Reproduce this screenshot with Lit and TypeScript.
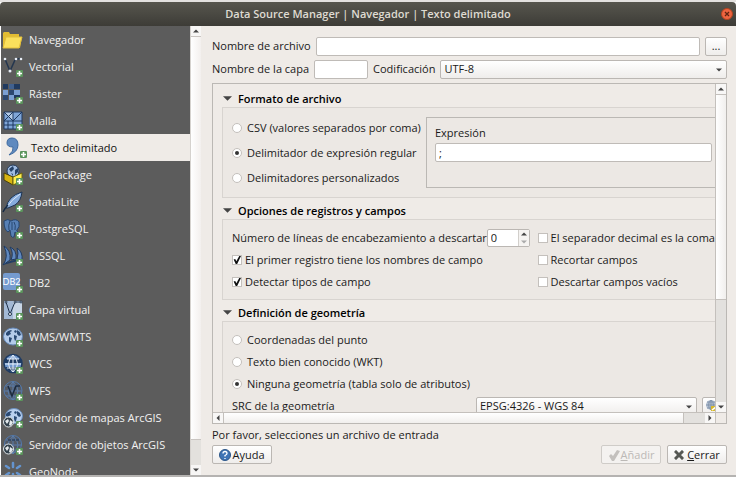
import { LitElement, html, svg, css, nothing, SVGTemplateResult } from "lit";
import { customElement } from "lit/decorators.js";
import { classMap } from "lit/directives/class-map.js";

interface Source {
  name: string;
  icon: string;
  active?: boolean;
}

const SOURCES: Source[] = [
  { name: "Navegador", icon: "folder" },
  { name: "Vectorial", icon: "vector" },
  { name: "Ráster", icon: "raster" },
  { name: "Malla", icon: "mesh" },
  { name: "Texto delimitado", icon: "comma", active: true },
  { name: "GeoPackage", icon: "geopackage" },
  { name: "SpatiaLite", icon: "feather" },
  { name: "PostgreSQL", icon: "elephant" },
  { name: "MSSQL", icon: "sail" },
  { name: "DB2", icon: "db2" },
  { name: "Capa virtual", icon: "virtual" },
  { name: "WMS/WMTS", icon: "wms" },
  { name: "WCS", icon: "wcs" },
  { name: "WFS", icon: "wfs" },
  { name: "Servidor de mapas ArcGIS", icon: "arcmap" },
  { name: "Servidor de objetos ArcGIS", icon: "arcfeature" },
  { name: "GeoNode", icon: "geonode" },
];

const land = svg`<path d="M3 6l2-2 3-1 1 1-2 1 1 2-2 1-1 1-2-1zM6 10l3 1-1 3-1 2-1-2zM11 4l2-1 1 2-2 1zM14 3l3 2 1 3-2 1-2-2zM11 8l3 1-1 4-1 1-1-3z" fill="#2a4a74"/>`;
const smallGlobe = svg`<circle cx="5.500" cy="14" r="5" fill="#34424d" stroke="#dfe5e8"/><path d="M2 13l3-2 1 2-2 3zM7 12l3 2-2 4-2-1z" fill="#e6ebee"/>`;
const graticule = svg`<path d="M10 1v18M1 10h18M3 5h14M3 15h14M10 1q-10 9 0 18M10 1q10 9 0 18" fill="none"/>`;

const ICONS: Record<string, SVGTemplateResult> = {
  folder: svg`<path d="M0 17V3l1-1h5l1 2h9v3h3l-2 11H1z" fill="#e3bd33"/><path d="M3 7h16l-3 11H0z" fill="#fbe05c" stroke="#e2bf3c"/>`,
  vector: svg`<path d="M2 2l5 12 5-11q2-2 7-1" fill="none" stroke="#24364f" stroke-width="1.500"/><g fill="#e8eef6"><circle cx="2" cy="2" r="1.300"/><circle cx="13" cy="2" r="1.300"/><circle cx="18" cy="2" r="1.300"/><circle cx="7" cy="14" r="1.500"/></g>`,
  raster: svg`<path d="M0 0h5v5H0zM11 0h6v5h-6z" fill="#203a5f"/><path d="M6 0h5v5H6z" fill="#41618f"/><path d="M0 6h5v5H0zM11 6h6v5h-6zM6 11h5v5H6z" fill="#7ba0d3"/><path d="M6 6h5v5H6zM0 11h5v5H0z" fill="#2c4871"/><path d="M11 11h6v3h-6z" fill="#203a5f"/>`,
  mesh: svg`<path d="M1 1h18v17H1z" fill="#7fa5d8"/><path d="M1 1h9v9z" fill="#b4cbe8"/><path d="M1 1h18v17H1zM1 10h18M10 1v17M1 1l9 9M10 1l-9 9M19 1l-9 9M1 14h18M5 10v8" fill="none" stroke="#1e3961"/>`,
  comma: svg`<path d="M0 5q0-5 5-5 6 0 6 7 0 7-9 10 5-4 4-8-6 0-6-4z" fill="#5f8abf" stroke="#3e6aa0"/>`,
  geopackage: svg`<circle cx="10" cy="6" r="6" fill="#9fbbe0" stroke="#243b5b"/><path d="M6 4l4-3 1 3-3 3zM12 5l3-2v4l-3 3zM8 8l2 1v2z" fill="#254268"/><path d="M1 8l9 4v8l-9-5z" fill="#d8b512" stroke="#4a410c"/><path d="M10 12l9-4v8l-9 4z" fill="#ffee50" stroke="#6a620f"/>`,
  feather: svg`<path d="M3 16Q5 4 19 0q-1 9-7 13l-7 3z" fill="#86abdc" stroke="#1d3453"/><path d="M4 15Q8 8 17 2" fill="none" stroke="#dbe8f8"/><path d="M0 20q2-4 5-7" fill="none" stroke="#152a45" stroke-width="1.500"/>`,
  elephant: svg`<path d="M1 2q4-3 7 0 5-3 8 1 1 5-2 8-1 1 1 2-2 2-3 0l-1 5q-2 1-3-1l-1-6-2 2q-4-2-4-11z" fill="#5780b5" stroke="#27466f"/><path d="M7 2q-2 4-1 9M11 3q2 3 1 8M9 3v8" fill="none" stroke="#27466f"/>`,
  sail: svg`<path d="M0 19q6-8 1-19 7 4 6 14zM8 14Q11 7 7 1q7 3 6 12zM14 13q2-6 0-11 6 4 5 12z" fill="#6089c0" stroke="#203b61"/><path d="M0 19q8-6 19-5l-8 2z" fill="#213e66"/>`,
  db2: svg`<rect x="0" y="0" width="17" height="17" rx="2" fill="#759bcf"/><text x="8.500" y="12" text-anchor="middle" font-family="Lato, sans-serif" font-size="9" fill="#fff">DB2</text>`,
  virtual: svg`<path d="M1 1h18v18H1z" fill="#a3b9d5"/><path d="M10 1h9v18h-9z" fill="#c8d6e6"/><path d="M3 2l4 12 5-12h6" fill="none" stroke="#1d304b"/><g fill="#fff" stroke="#20354f"><circle cx="3" cy="2" r="1"/><circle cx="12" cy="2" r="1"/><circle cx="18" cy="2" r="1"/><circle cx="7" cy="14" r="1.500"/></g>`,
  wms: svg`<ellipse cx="10" cy="9.500" rx="9.500" ry="8.500" fill="#b3cbea" stroke="#6488b8"/>${land}`,
  wcs: svg`<circle cx="10" cy="9.500" r="9" fill="#7199ce" stroke="#1f3b62" stroke-width="1.500"/><path d="M2 5h16v4H2zM2 13h15l-3 4H6z" fill="#1f3b62"/><path d="M10 1v17M2 10h16M10 1q-9 9 0 17M10 1q9 9 0 17M4 5h12M4 14h12" fill="none" stroke="#e4edf8"/>`,
  wfs: svg`<circle cx="10" cy="9.500" r="9" fill="#545b66" stroke="#5279ad"/><g stroke="#5a7daa">${graticule}</g><path d="M5 5l4 10 4-10h4" fill="none" stroke="#1b2a3f" stroke-width="1.500"/>`,
  arcmap: svg`<ellipse cx="11" cy="8" rx="8.500" ry="7.500" fill="#b9d0ef" stroke="#6b90c0"/>${land}${smallGlobe}`,
  arcfeature: svg`<circle cx="10" cy="9" r="8.500" fill="#545b66" stroke="#5279ad"/><g stroke="#5a7daa">${graticule}</g><path d="M5 5h12" stroke="#17263b" stroke-dasharray="3 1"/>${smallGlobe}`,
  geonode: svg`<g stroke="#6494cf" stroke-width="2.500" stroke-linecap="round"><path d="M10 1v4M3 4l3 2M17 4l-3 2M3 13l3-2M17 13l-3-2M10 16v-4"/></g>`,
};

const badge = svg`<rect x="13" y="13" width="7" height="7" rx="1" fill="#5b955c"/><path d="M16.500 14v5M14 16.500h5" stroke="#fff" stroke-width="1.600"/>`;

const arrow = (dir: "up" | "down" | "left" | "right") => {
  const d = {
    up: "M0 6L4 2l4 4z",
    down: "M0 2h8L4 6z",
    left: "M6 0v8L2 4z",
    right: "M2 0v8l4-4z",
  }[dir];
  return html`<svg class="arrow" viewBox="0 0 8 8" aria-hidden="true"><path d=${d} fill="currentColor" /></svg>`;
};

@customElement("source-list")
export class SourceList extends LitElement {
  static styles = css`
    :host {
      display: grid;
      grid-template-columns: minmax(0, 1fr) 11px;
      min-height: 0;
      overflow: hidden;
      background: #5c5c5c;
      border-left: 1px solid #fff;
    }
    .list {
      margin: 0;
      padding: 0;
      list-style: none;
      overflow: hidden;
      min-height: 0;
    }
    .item {
      display: flex;
      align-items: center;
      gap: 6px;
      width: 100%;
      height: 27px;
      padding: 0 2px;
      border: 0;
      background: none;
      color: #f2f2f2;
      font: inherit;
      text-align: left;
      white-space: nowrap;
    }
    .item.active {
      padding-left: 6px;
      gap: 4px;
      background: #efebe7;
      color: #111;
    }
    .icon {
      flex: none;
      width: 20px;
      height: 20px;
      overflow: visible;
    }
    .bar {
      display: flex;
      flex-direction: column;
      background: #e3e1dd;
      border-left: 1px solid #d5d2ce;
    }
    .step {
      display: grid;
      place-items: center;
      height: 10px;
      padding: 0;
      border: 0;
      background: #f7f6f5;
      color: #444;
    }
    .thumb {
      flex: 1;
      background: linear-gradient(90deg, #fff, #f3f0ee);
      border: solid #c9c5c1;
      border-width: 1px 0;
    }
    .trough {
      height: 25px;
    }
    .arrow {
      width: 6px;
      height: 6px;
    }
  `;

  render() {
    return html`
      <ul class="list">
        ${SOURCES.map(
          (s) => html`<li>
            <button class=${classMap({ item: true, active: !!s.active })}>
              <svg class="icon" viewBox="0 0 20 20" aria-hidden="true">
                ${ICONS[s.icon]}${s.icon === "folder" ? nothing : badge}
              </svg>
              <span>${s.name}</span>
            </button>
          </li>`
        )}
      </ul>
      <div class="bar">
        <button class="step" aria-label="Subir">${arrow("up")}</button>
        <div class="thumb"></div>
        <div class="trough"></div>
        <button class="step" aria-label="Bajar">${arrow("down")}</button>
      </div>
    `;
  }
}

@customElement("delimited-form")
export class DelimitedForm extends LitElement {
  static styles = css`
    :host {
      display: flex;
      flex-direction: column;
      min-width: 0;
      min-height: 0;
      padding: 11px 9px 11px 11px;
      background: #efebe7;
      white-space: nowrap;
    }
    * {
      box-sizing: border-box;
    }
    input,
    select,
    button {
      font: inherit;
      color: inherit;
      margin: 0;
    }
    .row {
      display: flex;
      align-items: center;
      gap: 5px;
      height: 18px;
      margin-bottom: 5px;
    }
    .text {
      height: 19px;
      min-width: 0;
      padding: 0 3px;
      border: 1px solid #bfbbb7;
      border-radius: 2px;
      background: #fff;
    }
    .grow {
      flex: 1;
    }
    .layer {
      width: 54px;
    }
    .button {
      display: flex;
      align-items: center;
      justify-content: center;
      height: 19px;
      padding: 0;
      border: 1px solid #bbb7b3;
      border-radius: 2px;
      background: linear-gradient(#fff, #efedeb);
    }
    .browse {
      width: 22px;
    }
    .combo {
      position: relative;
      display: flex;
      min-width: 0;
    }
    .combo select {
      appearance: none;
      width: 100%;
      height: 19px;
      padding: 0 16px 0 3px;
      border: 1px solid #bbb7b3;
      border-radius: 2px;
      background: linear-gradient(#fff, #efedeb);
    }
    .combo .arrow {
      position: absolute;
      right: 5px;
      top: 7px;
      pointer-events: none;
    }
    .arrow {
      width: 6px;
      height: 6px;
      color: #444;
    }
    .pane {
      flex: 1;
      min-height: 0;
      display: grid;
      grid-template-columns: minmax(0, 1fr) 11px;
      grid-template-rows: minmax(0, 1fr) 11px;
      border: 1px solid #bbb8b4;
    }
    .view {
      overflow: hidden;
    }
    .canvas {
      width: calc(100% + 30px);
      padding: 6px 9px;
    }
    .head {
      display: flex;
      align-items: center;
      gap: 6px;
      height: 17px;
      margin: 0;
      padding-left: 1px;
      font-size: 11px;
      font-weight: 600;
      color: #000;
    }
    .head .arrow {
      width: 9px;
      height: 9px;
    }
    .group {
      border: 1px solid #d8d4d0;
      background: #ece8e4;
      padding: 7px 9px;
      margin-bottom: 4px;
    }
    .format {
      display: grid;
      grid-template-columns: 194px minmax(0, 1fr);
      height: 91px;
      padding-top: 9px;
    }
    .choices {
      display: flex;
      flex-direction: column;
      gap: 3px;
    }
    .choices .option {
      height: 22px;
    }
    .expr {
      height: 71px;
      padding: 6px 13px 6px 8px;
      border: 1px solid #bbb8b4;
      display: flex;
      flex-direction: column;
      gap: 1px;
    }
    .expr label {
      line-height: 18px;
    }
    .options {
      display: grid;
      grid-template-columns: minmax(0, 30fr) minmax(0, 19fr);
      grid-auto-rows: 22px;
      column-gap: 8px;
      height: 81px;
    }
    .option {
      display: flex;
      align-items: center;
      gap: 5px;
    }
    .options .option {
      gap: 3px;
    }
    .count {
      display: flex;
      align-items: center;
      justify-content: space-between;
    }
    .spin {
      display: flex;
      width: 43px;
      height: 18px;
      border: 1px solid #bbb7b3;
      border-radius: 2px;
      background: #fff;
    }
    .spin input {
      appearance: textfield;
      flex: 1;
      min-width: 0;
      padding: 0 3px;
      border: 0;
      background: none;
    }
    .spin input::-webkit-inner-spin-button {
      display: none;
    }
    .steps {
      display: flex;
      flex-direction: column;
      width: 11px;
      border-left: 1px solid #d2cfcb;
    }
    .steps button {
      flex: 1;
      display: grid;
      place-items: center;
      min-height: 0;
      padding: 0;
      border: 0;
      background: #f5f3f1;
    }
    .steps .off .arrow {
      color: #aaa;
    }
    .radio,
    .check {
      appearance: none;
      flex: none;
      display: grid;
      place-items: center;
      width: 10px;
      height: 10px;
      background: #fff;
      border: 1px solid #c4c0bc;
    }
    .radio {
      border-radius: 50%;
    }
    .radio:checked::before {
      content: "";
      width: 4px;
      height: 4px;
      border-radius: 50%;
      background: #333;
    }
    .check:checked::before {
      content: "";
      width: 8px;
      height: 8px;
      background: #111;
      clip-path: polygon(8% 45%, 28% 38%, 42% 65%, 78% 0, 100% 0, 52% 100%, 34% 100%);
    }
    .geometry .option {
      height: 22px;
    }
    .crs {
      display: grid;
      grid-template-columns: minmax(0, 244fr) minmax(0, 221fr) 29px;
      align-items: center;
      height: 22px;
    }
    .crs .button {
      margin-left: 5px;
      width: 24px;
      padding: 0 3px;
      justify-content: flex-start;
    }
    .globe {
      width: 14px;
      height: 14px;
      flex: none;
    }
    .vbar,
    .hbar {
      display: flex;
      background: #e3e1de;
    }
    .vbar {
      flex-direction: column;
      border-left: 1px solid #c4c0bc;
    }
    .hbar {
      border-top: 1px solid #c4c0bc;
    }
    .corner {
      border: solid #c4c0bc;
      border-width: 1px 0 0 1px;
    }
    .step {
      display: grid;
      place-items: center;
      flex: none;
      width: 10px;
      height: 10px;
      padding: 0;
      border: 0;
      background: #f8f7f6;
    }
    .vthumb {
      flex: 2;
      border: solid #c4c0bc;
      border-width: 1px 0;
      background: linear-gradient(90deg, #fff, #f1efed);
    }
    .vrest {
      flex: 1;
    }
    .hthumb {
      flex: 22;
      border: solid #c4c0bc;
      border-width: 0 1px;
      background: linear-gradient(#fff, #f1efed);
    }
    .hrest {
      flex: 1;
    }
    .status {
      margin: 3px 0 2px;
      line-height: 16px;
    }
    .footer {
      display: flex;
      gap: 6px;
    }
    .footer .button {
      gap: 1px;
      width: 60px;
    }
    .footer .close {
      gap: 3px;
    }
    .footer .add {
      margin-left: auto;
      color: #bcb9b6;
      border-color: #cfccc8;
      background: #f4f2f0;
    }
    .glyph {
      width: 12px;
      height: 12px;
    }
    .close .glyph {
      width: 10px;
      height: 10px;
    }
  `;

  private option(type: "radio" | "checkbox", label: string, checked = false, name = "") {
    return html`<label class="option">
      <input class=${type === "radio" ? "radio" : "check"} type=${type} name=${name || nothing} ?checked=${checked} />
      <span>${label}</span>
    </label>`;
  }

  private head(title: string) {
    return html`<h2 class="head">${arrow("down")}${title}</h2>`;
  }

  render() {
    return html`
      <div class="row">
        <label for="file">Nombre de archivo</label>
        <input id="file" class="text grow" type="text" />
        <button class="button browse" aria-label="Examinar">...</button>
      </div>
      <div class="row">
        <label for="layer">Nombre de la capa</label>
        <input id="layer" class="text layer" type="text" />
        <label for="encoding">Codificación</label>
        <div class="combo grow">
          <select id="encoding"><option>UTF-8</option></select>
          ${arrow("down")}
        </div>
      </div>

      <div class="pane">
        <div class="view">
          <div class="canvas">
            ${this.head("Formato de archivo")}
            <div class="group format">
              <div class="choices">
                ${this.option("radio", "CSV (valores separados por coma)", false, "format")}
                ${this.option("radio", "Delimitador de expresión regular", true, "format")}
                ${this.option("radio", "Delimitadores personalizados", false, "format")}
              </div>
              <div class="expr">
                <label for="expr">Expresión</label>
                <input id="expr" class="text" type="text" value=";" />
              </div>
            </div>

            ${this.head("Opciones de registros y campos")}
            <div class="group options">
              <div class="count">
                <label for="skip">Número de líneas de encabezamiento a descartar</label>
                <div class="spin">
                  <input id="skip" type="number" value="0" />
                  <div class="steps">
                    <button aria-label="Aumentar">${arrow("up")}</button>
                    <button class="off" aria-label="Disminuir">${arrow("down")}</button>
                  </div>
                </div>
              </div>
              ${this.option("checkbox", "El separador decimal es la coma")}
              ${this.option("checkbox", "El primer registro tiene los nombres de campo", true)}
              ${this.option("checkbox", "Recortar campos")}
              ${this.option("checkbox", "Detectar tipos de campo", true)}
              ${this.option("checkbox", "Descartar campos vacíos")}
            </div>

            ${this.head("Definición de geometría")}
            <div class="group geometry">
              ${this.option("radio", "Coordenadas del punto", false, "geometry")}
              ${this.option("radio", "Texto bien conocido (WKT)", false, "geometry")}
              ${this.option("radio", "Ninguna geometría (tabla solo de atributos)", true, "geometry")}
              <div class="crs">
                <label for="crs">SRC de la geometría</label>
                <div class="combo">
                  <select id="crs"><option>EPSG:4326 - WGS 84</option></select>
                  ${arrow("down")}
                </div>
                <button class="button" aria-label="Seleccionar SRC">
                  <svg class="globe" viewBox="0 0 14 14" aria-hidden="true">
                    <circle cx="5" cy="6" r="5" fill="#b4c0d0" />
                    <path d="M5 1v10M0 6h10M1 3h8M1 9h8M5 1q-5 5 0 10M5 1q5 5 0 10" fill="none" stroke="#8395ad" />
                    <path d="M5 7h6v5H5z" fill="#d8b92c" />
                    <path d="M6 11l4-3" stroke="#fff" stroke-width="1.500" />
                  </svg>
                </button>
              </div>
            </div>
          </div>
        </div>
        <div class="vbar">
          <button class="step" aria-label="Subir">${arrow("up")}</button>
          <div class="vthumb"></div>
          <div class="vrest"></div>
          <button class="step" aria-label="Bajar">${arrow("down")}</button>
        </div>
        <div class="hbar">
          <button class="step" aria-label="Izquierda">${arrow("left")}</button>
          <div class="hthumb"></div>
          <div class="hrest"></div>
          <button class="step" aria-label="Derecha">${arrow("right")}</button>
        </div>
        <div class="corner"></div>
      </div>

      <p class="status">Por favor, selecciones un archivo de entrada</p>
      <div class="footer">
        <button class="button">
          <svg class="glyph" viewBox="0 0 12 12" aria-hidden="true">
            <circle cx="6" cy="6" r="5.500" fill="#3f74b5" stroke="#2c5688" />
            <path d="M4 4.500q0-2 2-2t2 2q0 1-2 2v1M6 9v1" fill="none" stroke="#fff" stroke-width="1.300" />
          </svg>
          Ayuda
        </button>
        <button class="button add" disabled>
          <svg class="glyph" viewBox="0 0 12 12" aria-hidden="true">
            <path d="M1 7l2-2 2 2 4-6 3 1-6 10H4z" fill="#c3c0bd" />
          </svg>
          <span><u>A</u>ñadir</span>
        </button>
        <button class="button close">
          <svg class="glyph" viewBox="0 0 10 10" aria-hidden="true">
            <path d="M2 2l6 6M8 2L2 8" stroke="#555753" stroke-width="3" stroke-linecap="square" />
          </svg>
          <span><u>C</u>errar</span>
        </button>
      </div>
    `;
  }
}

@customElement("app-root")
export class AppRoot extends LitElement {
  static styles = css`
    :host {
      display: grid;
      grid-template-columns: 201px minmax(0, 1fr);
      grid-template-rows: 24px minmax(0, 1fr);
      box-sizing: border-box;
      height: 100vh;
      border-top: 2px solid #e4e2e0;
      border-bottom: 2px solid #b5b3b1;
      font: 11px/16px "Open Sans", "Noto Sans", sans-serif;
      color: #1a1a1a;
    }
    .title {
      grid-column: 1 / -1;
      display: grid;
      grid-template-columns: 16px 1fr 16px;
      align-items: center;
      padding: 0 1px;
      border-radius: 4px 4px 0 0;
      background: linear-gradient(#57564e, #3d3c37);
      color: #dfdbd2;
    }
    .name {
      grid-column: 2;
      margin: 0;
      font-size: 11px;
      font-weight: 600;
      text-align: center;
    }
    .quit {
      justify-self: center;
      display: grid;
      padding: 0;
      border: 0;
      background: none;
    }
    .cross {
      width: 12px;
      height: 12px;
    }
  `;

  render() {
    return html`
      <header class="title">
        <h1 class="name">Data Source Manager | Navegador | Texto delimitado</h1>
        <button class="quit" aria-label="Cerrar ventana">
          <svg class="cross" viewBox="0 0 12 12" aria-hidden="true">
            <circle cx="6" cy="6" r="5.500" fill="#ee6440" stroke="#b3441f" />
            <path d="M4 4l4 4M8 4L4 8" stroke="#5f2411" stroke-width="1.300" />
          </svg>
        </button>
      </header>
      <source-list></source-list>
      <delimited-form></delimited-form>
    `;
  }
}
